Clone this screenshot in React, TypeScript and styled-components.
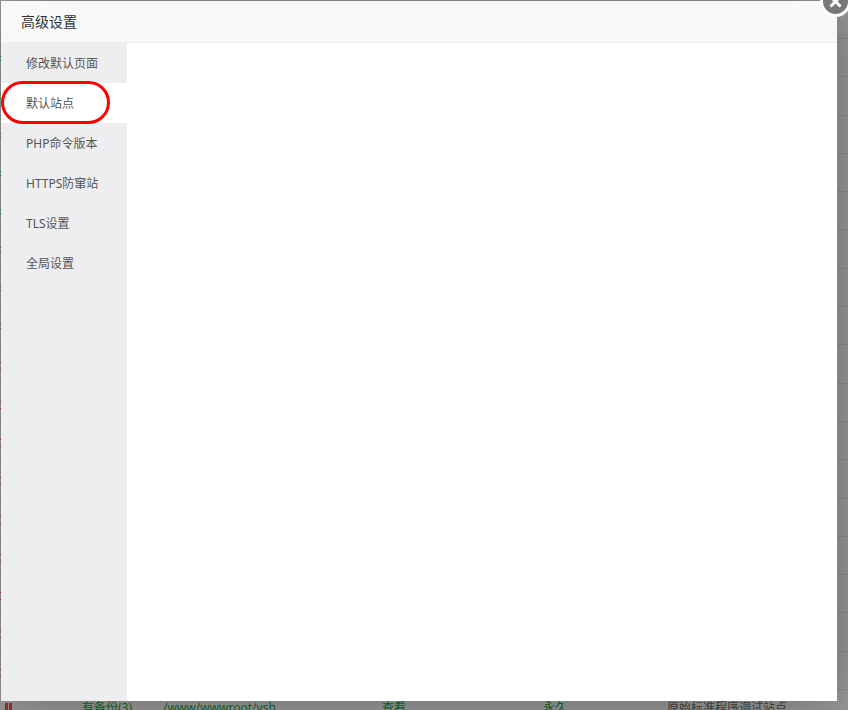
import React from 'react';
import styled, { createGlobalStyle } from 'styled-components';

const GlobalStyle = createGlobalStyle`
  html, body {
    margin: 0;
    padding: 0;
    height: 100%;
    overflow: hidden;
    background: #999;
    font-family: "Noto Sans", "Noto Sans CJK SC", sans-serif;
    font-size: 12px;
  }
`;

const Page = styled.div`
  position: relative;
  width: 848px;
  height: 710px;
  overflow: hidden;
  background: #999;
`;

const SiteTable = styled.div`
  display: flex;
  flex-direction: column;
`;

const HeadRow = styled.div`
  height: 38px;
  border-bottom: 1px solid #8b8b8b;
`;

const SiteRow = styled.div`
  display: flex;
  height: 38.3px;
  box-sizing: border-box;
  border-bottom: 1px solid #8b8b8b;
`;

const Ticks = styled.div<{ $gap: number }>`
  display: flex;
  flex-direction: column;
  gap: ${props => props.$gap}px;
  width: 1px;
  padding-top: 17px;
`;

const Tick = styled.i<{ $tone: 'green' | 'red' }>`
  display: block;
  width: 1px;
  height: 1px;
  background: ${props => (props.$tone === 'green' ? '#0c8a2c' : '#b82a2a')};
`;

const LastRow = styled.div`
  display: grid;
  grid-template-columns: 82px 81px 219px 161px 124px 1fr;
  height: 38px;
  padding-top: 9px;
  line-height: 17px;
  color: #444;
`;

const PauseIcon = styled.div`
  display: flex;
  gap: 1px;
  padding: 4px 0 0 5px;
`;

const PauseBar = styled.span`
  width: 3px;
  height: 16px;
  background: #9c2f2f;
`;

const GreenCell = styled.span`
  color: #12682a;
`;

const GrayCell = styled.span`
  color: #444;
`;

const Modal = styled.div`
  position: absolute;
  left: 1px;
  top: 1px;
  width: 836px;
  height: 700px;
  display: flex;
  flex-direction: column;
  background: #fff;
  box-shadow: 1px 1px 50px rgba(0, 0, 0, 0.3);
`;

const ModalTitle = styled.div`
  flex: none;
  height: 41px;
  box-sizing: content-box;
  padding-left: 20px;
  background: #f8f8f8;
  border-bottom: 1px solid #eee;
  color: #333;
  font-size: 14px;
  line-height: 41px;
`;

const ModalBody = styled.div`
  flex: 1;
  display: flex;
  min-height: 0;
`;

const Sidebar = styled.ul`
  flex: none;
  width: 126px;
  margin: 0;
  padding: 0;
  list-style: none;
  background: #eeeef0;
`;

const SidebarItem = styled.li<{ $active?: boolean }>`
  position: relative;
  height: 40px;
  padding-left: 25px;
  background: ${props => (props.$active ? '#fff' : 'transparent')};
  color: #555;
  font-size: 12px;
  line-height: 42px;
`;

const RedMark = styled.span`
  position: absolute;
  left: 0;
  top: -2px;
  width: 109px;
  height: 43px;
  box-sizing: border-box;
  border: 3px solid #f00;
  border-radius: 22px;
`;

const CloseButton = styled.button`
  position: absolute;
  left: 820px;
  top: -14px;
  width: 31px;
  height: 31px;
  box-sizing: border-box;
  padding: 0;
  display: flex;
  align-items: center;
  justify-content: center;
  background: #787878;
  border: 3px solid #fff;
  border-radius: 50%;
`;

const menu = ['修改默认页面', '默认站点', 'PHP命令版本', 'HTTPS防窜站', 'TLS设置', '全局设置'];

// rows behind the dialog: green status first, stopped sites after that
const rows = Array.from({ length: 17 }, (_, i) => (i < 8 ? 'green' : 'red') as 'green' | 'red');

export default function App() {
  return (
    <Page>
      <GlobalStyle />
      <SiteTable>
        <HeadRow />
        {rows.map((tone, i) => (
          <SiteRow key={i}>
            <Ticks $gap={tone === 'green' ? 3 : 6}>
              <Tick $tone={tone} />
              <Tick $tone={tone} />
            </Ticks>
          </SiteRow>
        ))}
        <LastRow>
          <PauseIcon>
            <PauseBar />
            <PauseBar />
          </PauseIcon>
          <GreenCell>有备份(3)</GreenCell>
          <GreenCell>/www/wwwroot/ysh</GreenCell>
          <GreenCell>查看</GreenCell>
          <GreenCell>永久</GreenCell>
          <GrayCell>原始标准程序调试站点</GrayCell>
        </LastRow>
      </SiteTable>
      <Modal>
        <ModalTitle>高级设置</ModalTitle>
        <ModalBody>
          <Sidebar>
            {menu.map(label => (
              <SidebarItem key={label} $active={label === '默认站点'}>
                {label}
                {label === '默认站点' && <RedMark />}
              </SidebarItem>
            ))}
          </Sidebar>
        </ModalBody>
      </Modal>
      <CloseButton aria-label="关闭">
        <svg width="25" height="25" viewBox="0 0 25 25">
          <path d="M7.5 7.5 L17.5 17.5 M17.5 7.5 L7.5 17.5" stroke="#fff" strokeWidth="3" fill="none" />
        </svg>
      </CloseButton>
    </Page>
  );
}
